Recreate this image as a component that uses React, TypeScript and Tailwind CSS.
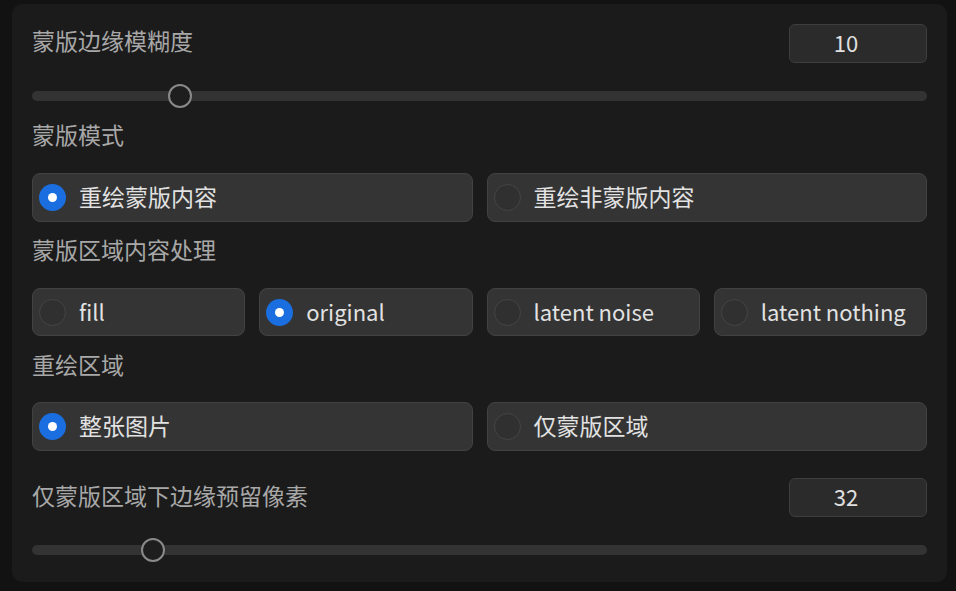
const font = { fontFamily: '"Noto Sans CJK SC", "Noto Sans", sans-serif' };

function Label({ text, className = '' }: { text: string; className?: string }) {
  return (
    <div className={`h-[30px] flex items-center pb-[5px] text-[23px] text-[#a8a8a8] leading-none ${className}`}>
      {text}
    </div>
  );
}

function NumberBox({ value }: { value: number }) {
  return (
    <div className="w-[138px] h-[39px] rounded-md bg-[#2b2b2b] border border-[#3e3e3e] flex items-center justify-center pb-[2px] pr-[24px] text-[22px] text-[#e0e0e0]">
      {value}
    </div>
  );
}

function Slider({ offset, className = '' }: { offset: number; className?: string }) {
  return (
    <div className={`relative h-[24px] flex items-center ${className}`}>
      <div className="w-full h-[10px] rounded-full bg-[#333333]" />
      <div
        className="absolute top-0 w-[24px] h-[24px] rounded-full border-2 border-[#8a8a8a] bg-[#1e1e1e]"
        style={{ left: offset - 12 }}
      />
    </div>
  );
}

function Radio({ label, checked, latin }: { label: string; checked?: boolean; latin?: boolean }) {
  return (
    <div className="flex items-center h-full rounded-lg bg-[#343434] border border-[#424242] pl-[6px]">
      {checked ? (
        <div className="w-[27px] h-[27px] rounded-full bg-[#1a6ee0] flex items-center justify-center shrink-0">
          <div className="w-[9px] h-[9px] rounded-full bg-white" />
        </div>
      ) : (
        <div className="w-[27px] h-[27px] rounded-full bg-[#303030] border border-[#454545] shrink-0" />
      )}
      <span
        className={`ml-[13px] pb-[3px] text-[#e2e2e2] leading-none ${latin ? 'text-[22px]' : 'text-[23px]'}`}
      >
        {label}
      </span>
    </div>
  );
}

export default function App() {
  return (
    <div className="w-[956px] h-[591px] bg-[#121212] pt-1 pl-3 pr-[9px]" style={font}>
      <div className="h-[578px] rounded-[10px] bg-[#1b1b1b] px-5 pt-5 flex flex-col">
        <div className="flex items-center justify-between h-[38px]">
          <Label text="蒙版边缘模糊度" />
          <NumberBox value={10} />
        </div>
        <Slider offset={148} className="mt-[22px]" />

        <Label text="蒙版模式" className="mt-[14px]" />
        <div className="grid grid-cols-2 gap-[14px] h-[49px] mt-[21px]">
          <Radio label="重绘蒙版内容" checked />
          <Radio label="重绘非蒙版内容" />
        </div>

        <Label text="蒙版区域内容处理" className="mt-[15px]" />
        <div className="grid grid-cols-4 gap-[14px] h-[48px] mt-[21px]">
          <Radio label="fill" latin />
          <Radio label="original" checked latin />
          <Radio label="latent noise" latin />
          <Radio label="latent nothing" latin />
        </div>

        <Label text="重绘区域" className="mt-[16px]" />
        <div className="grid grid-cols-2 gap-[14px] h-[49px] mt-[20px]">
          <Radio label="整张图片" checked />
          <Radio label="仅蒙版区域" />
        </div>

        <div className="flex items-center justify-between h-[39px] mt-[27px]">
          <Label text="仅蒙版区域下边缘预留像素" />
          <NumberBox value={32} />
        </div>
        <Slider offset={121} className="mt-[21px]" />
      </div>
    </div>
  );
}
